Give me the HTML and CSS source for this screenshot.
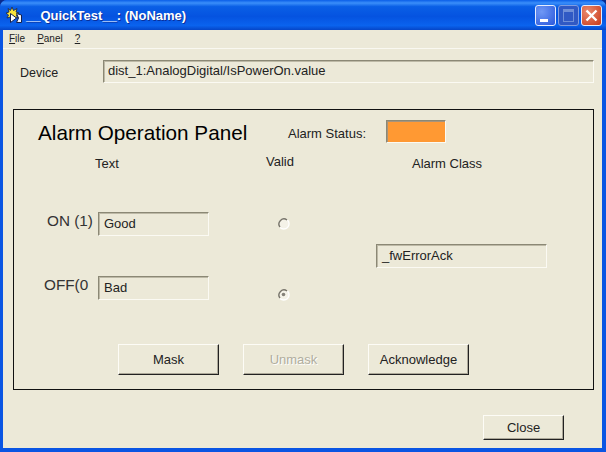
FILE: index.html
```html
<!DOCTYPE html>
<html>
    <head>
        <meta charset="UTF-8" />
        <title>__QuickTest__: (NoName)</title>
        <link rel="stylesheet" href="styles.css">
    </head>
    <body>
    <div class="window">
        <div class="titlebar">
            <svg class="app-icon" width="18" height="18" viewBox="0 0 18 18">
                <polygon points="6,1 7.5,4.5 11,2.5 10,6 13,7 10.5,9 11.5,12 8,11 6,14.5 4.5,11 1,12 2.5,9 0,7 3,6 2,2.5 4.5,4.5" fill="#f9e43a" stroke="#1c2a50" stroke-width="0.9"/>
                <polygon points="4.5,7.5 10.5,12 4.5,16.5" fill="#ffffff" stroke="#14204a" stroke-width="1"/>
                <polygon points="10.5,7.5 15.5,9 15.5,16.5 10.5,16.5 12.5,12" fill="#f2f5fb" stroke="#14204a" stroke-width="1"/>
            </svg>
            <span class="title-text">__QuickTest__: (NoName)</span>
            <div class="controls">
                <div class="ctl ctl-min"><span class="min-bar"></span></div>
                <div class="ctl ctl-max"><span class="max-box"></span></div>
                <div class="ctl ctl-close">
                    <svg width="21" height="21" viewBox="0 0 21 21">
                        <path d="M5.5 5.5 L15.5 15.5 M15.5 5.5 L5.5 15.5" stroke="#ffffff" stroke-width="2.4" fill="none"/>
                    </svg>
                </div>
            </div>
        </div>
        <div class="content">
            <div class="menu">
                <span class="menu-item"><u>F</u>ile</span>
                <span class="menu-item"><u>P</u>anel</span>
                <span class="menu-item"><u>?</u></span>
            </div>
            <div class="device-row">
                <span class="device-label">Device</span>
                <div class="field device-field">dist_1:AnalogDigital/IsPowerOn.value</div>
            </div>
            <div class="panel">
                <div class="panel-head">
                    <h2 class="panel-title">Alarm Operation Panel</h2>
                    <span class="status-label">Alarm Status:</span>
                    <div class="status-box"></div>
                </div>
                <div class="col-heads">
                    <span class="head-text">Text</span>
                    <span class="head-valid">Valid</span>
                    <span class="head-class">Alarm Class</span>
                </div>
                <div class="alarm-grid">
                    <span class="state-label on-label">ON (1)</span>
                    <div class="field text-field on-field">Good</div>
                    <svg class="radio on-radio" width="13" height="13" viewBox="0 0 13 13">
                        <circle cx="6.5" cy="6.5" r="5" fill="#f4f2e8"/>
                        <path d="M10 3 A5 5 0 0 0 3 10" stroke="#77746a" stroke-width="1.4" fill="none"/>
                        <path d="M3 10.5 A5 5 0 0 0 10.5 3" stroke="#ffffff" stroke-width="1.4" fill="none"/>
                    </svg>
                    <div class="field class-field">_fwErrorAck</div>
                    <span class="state-label off-label">OFF(0</span>
                    <div class="field text-field off-field">Bad</div>
                    <svg class="radio off-radio" width="13" height="13" viewBox="0 0 13 13">
                        <circle cx="6.5" cy="6.5" r="5" fill="#f4f2e8"/>
                        <path d="M10 3 A5 5 0 0 0 3 10" stroke="#77746a" stroke-width="1.4" fill="none"/>
                        <path d="M3 10.5 A5 5 0 0 0 10.5 3" stroke="#ffffff" stroke-width="1.4" fill="none"/>
                        <circle cx="6.5" cy="6.5" r="1.8" fill="#85827a"/>
                    </svg>
                </div>
                <div class="panel-buttons">
                    <button class="btn">Mask</button>
                    <button class="btn btn-off">Unmask</button>
                    <button class="btn">Acknowledge</button>
                </div>
            </div>
            <div class="footer">
                <button class="btn btn-close">Close</button>
            </div>
        </div>
    </div>
    </body>
</html>
```
FILE: styles.css
```css
html, body {
    margin: 0;
    padding: 0;
    background: #0a2a8c;
}
.window {
    width: 606px;
    height: 452px;
    box-sizing: border-box;
    padding: 0 4px 4px 3px;
    display: flex;
    flex-direction: column;
    border-radius: 7px 7px 0 0;
    background: #0a55e3;
    font-family: "Liberation Sans", Arial, sans-serif;
    font-size: 13px;
    color: #222;
}
.titlebar {
    height: 30px;
    flex: none;
    margin: 0 -4px 0 -3px;
    padding: 0 4px 0 6px;
    display: flex;
    align-items: center;
    border-radius: 7px 7px 0 0;
    background: linear-gradient(#0a5ee8 0%, #3b8ffa 10%, #0a5fe6 22%, #0553e0 55%, #0a63ee 85%, #0546c8 100%);
}
.app-icon {
    flex: none;
    margin-right: 2px;
}
.title-text {
    color: #fff;
    font-weight: bold;
    font-size: 13px;
    text-shadow: 1px 1px 0 #0a2f9a;
}
.controls {
    margin-left: auto;
    display: flex;
    gap: 2px;
}
.ctl {
    width: 21px;
    height: 21px;
    box-sizing: border-box;
    border: 1px solid #e4ecff;
    border-radius: 3px;
    display: flex;
    overflow: hidden;
}
.ctl-min {
    background: radial-gradient(circle at 30% 30%, #6f98f5, #2a58dc);
    align-items: flex-end;
}
.min-bar {
    width: 8px;
    height: 3px;
    background: #fff;
    margin: 0 0 3px 4px;
}
.ctl-max {
    background: #3059c4;
    border-color: #7f9ce0;
    align-items: center;
    justify-content: center;
}
.max-box {
    width: 9px;
    height: 9px;
    border: 1px solid #6f8fd8;
    border-top-width: 3px;
}
.ctl-close {
    background: radial-gradient(circle at 30% 30%, #ea8a6e, #c9391a);
}
.ctl-close svg {
    margin: -1px;
}
.content {
    flex: 1;
    background: #ece9d8;
}
.menu {
    height: 19px;
    box-sizing: border-box;
    padding: 2px 0 0 6px;
    display: flex;
    gap: 12px;
    font-size: 10px;
    line-height: 14px;
    border-bottom: 1px solid #f9f8f1;
}
.device-row {
    margin-top: 11px;
    padding-left: 17px;
    display: flex;
    align-items: center;
}
.device-label {
    width: 83px;
    padding-top: 2px;
    font-size: 12.5px;
}
.field {
    box-sizing: border-box;
    height: 24px;
    padding: 0 0 2px 5px;
    display: flex;
    align-items: center;
    background: #ece9d8;
    border: 1px solid #fbfaf3;
    border-top-color: #8b8875;
    border-left-color: #8b8875;
    box-shadow: inset 1px 1px 0 #bdb9a6;
}
.device-field {
    width: 491px;
    height: 23px;
    padding-left: 4px;
}
.panel {
    margin: 26px 0 0 10px;
    width: 581px;
    height: 281px;
    box-sizing: border-box;
    border: 1px solid #111;
}
.panel-head {
    margin-top: 10px;
    padding-left: 24px;
    height: 23px;
    display: flex;
    align-items: center;
}
.panel-title {
    margin: 0;
    width: 250px;
    padding-top: 3px;
    font-size: 20.7px;
    font-weight: normal;
    color: #000;
}
.status-label {
    width: 98px;
    padding-top: 3px;
}
.status-box {
    width: 60px;
    height: 23px;
    box-sizing: border-box;
    background: #ff9933;
    border: 1px solid #fbfaf3;
    border-top-color: #8b8875;
    border-left-color: #8b8875;
    box-shadow: inset 1px 1px 0 #a8937a;
}
.col-heads {
    margin-top: 13px;
    height: 16px;
    display: flex;
    line-height: 16px;
}
.head-text {
    margin-left: 81px;
    width: 171px;
}
.head-valid {
    margin-top: -2px;
    width: 146px;
}
.alarm-grid {
    margin-top: 40px;
    display: grid;
    grid-template-columns: 84px 111px 68px 13px 86px 171px;
    grid-template-rows: 24px 24px 24px;
    row-gap: 8px;
}
.state-label {
    font-size: 15.3px;
    line-height: 18px;
    color: #333;
}
.on-label {
    grid-area: 1 / 1;
    padding-left: 33px;
}
.off-label {
    grid-area: 3 / 1;
    padding-left: 30px;
}
.on-field {
    grid-area: 1 / 2;
}
.off-field {
    grid-area: 3 / 2;
}
.text-field {
    height: 24px;
}
.class-field {
    grid-area: 2 / 6;
}
.radio {
    grid-column: 4;
}
.on-radio {
    grid-row: 1;
    margin-top: 5px;
}
.off-radio {
    grid-row: 3;
    margin-top: 12px;
}
.panel-buttons {
    margin-top: 44px;
    padding-left: 104px;
    display: flex;
    gap: 24px;
}
.btn {
    width: 101px;
    height: 31px;
    padding: 0;
    font-family: "Liberation Sans", Arial, sans-serif;
    font-size: 13px;
    color: #222;
    background: #ece9d8;
    border: 1px solid;
    border-color: #fdfcf6 #222 #222 #fdfcf6;
    box-shadow: inset -1px -1px 0 #aca899;
}
.btn-off {
    color: #b0ad9e;
    text-shadow: 1px 1px 0 #fff;
}
.footer {
    margin-top: 25px;
    padding-right: 38px;
    display: flex;
    justify-content: flex-end;
}
.btn-close {
    width: 81px;
    height: 25px;
}
```
